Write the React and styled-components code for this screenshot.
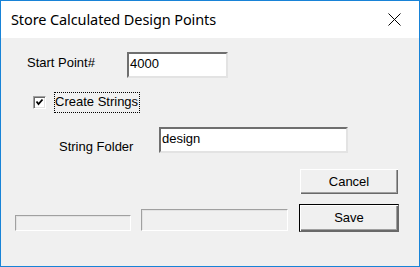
import React from "react";
import styled, { createGlobalStyle } from "styled-components";

const Global = createGlobalStyle`
  html, body { margin: 0; padding: 0; background: #f0f0f0; }
  * { box-sizing: border-box; }
`;

const Window = styled.div`
  width: 420px;
  height: 267px;
  border: 1px solid #1883d7;
  display: flex;
  flex-direction: column;
  background: #f0f0f0;
  font-family: "Liberation Sans", Arial, sans-serif;
  font-size: 13px;
  color: #000;
`;

const TitleBar = styled.div`
  height: 37px;
  flex: none;
  background: #fff;
  display: flex;
  align-items: center;
  padding-left: 10px;
  padding-bottom: 1px;
`;

const Title = styled.div`
  flex: 1;
  font-family: "Noto Sans", "Open Sans", sans-serif;
  font-size: 14.5px;
  letter-spacing: -0.1px;
  color: #000;
`;

const CloseBtn = styled.div`
  width: 46px;
  height: 36px;
  display: flex;
  align-items: center;
  justify-content: center;
  margin-right: 2px;
`;

const Body = styled.div`
  flex: 1;
  display: flex;
  flex-direction: column;
  padding: 14px 0 0 0;
`;

const Row = styled.div`
  display: flex;
  align-items: flex-start;
  padding-left: ${(p) => p.$indent}px;
  margin-top: ${(p) => p.$top || 0}px;
`;

const Label = styled.div`
  width: ${(p) => p.$w}px;
  padding-top: ${(p) => p.$pt}px;
  line-height: 15px;
  white-space: nowrap;
`;

const TextBox = styled.div`
  width: ${(p) => p.$w}px;
  height: 26px;
  background: #fff;
  border-top: 2px solid #6f6f6f;
  border-left: 2px solid #6f6f6f;
  border-right: 2px solid #e3e3e3;
  border-bottom: 2px solid #e3e3e3;
  padding: 2px 0 0 1px;
  line-height: 15px;
`;

const CheckRow = styled.div`
  display: flex;
  align-items: center;
  padding-left: 32px;
  margin-top: 14px;
  height: 21px;
`;

const CheckBox = styled.div`
  width: 13px;
  height: 13px;
  background: #fff;
  border-top: 1px solid #a0a0a0;
  border-left: 1px solid #a0a0a0;
  border-right: 1px solid #fff;
  border-bottom: 1px solid #fff;
  box-shadow: inset 1px 1px 0 #696969, inset -1px -1px 0 #e3e3e3;
  display: flex;
  align-items: center;
  justify-content: center;
`;

const CheckLabel = styled.div`
  margin-left: 8px;
  border: 1px dotted #000;
  padding: 1px 1px 2px 0;
  line-height: 16px;
`;

const Bottom = styled.div`
  display: flex;
  align-items: flex-end;
  padding-left: 14px;
  margin-top: 14px;
`;

const StatusBox = styled.div`
  width: ${(p) => p.$w}px;
  height: ${(p) => p.$h}px;
  margin-right: ${(p) => p.$mr}px;
  margin-bottom: 1px;
  border-top: 1px solid #a0a0a0;
  border-left: 1px solid #a0a0a0;
  border-right: 1px solid #fff;
  border-bottom: 1px solid #fff;
  box-shadow: inset 1px 1px 0 #e3e3e3;
`;

const Buttons = styled.div`
  display: flex;
  flex-direction: column;
  gap: 9px;
`;

const Button = styled.div`
  width: 100px;
  height: ${(p) => (p.$default ? 28 : 27)}px;
  display: flex;
  align-items: center;
  justify-content: center;
  background: #f0f0f0;
  border: 1px solid ${(p) => (p.$default ? "#000" : "transparent")};
  box-shadow: ${(p) =>
    p.$default
      ? "inset 1px 1px 0 #fff, inset -1px -1px 0 #696969, inset -2px -2px 0 #a0a0a0"
      : "inset 1px 1px 0 #fff, inset -1px -1px 0 #696969, inset -2px -2px 0 #a0a0a0"};
  border-right-color: ${(p) => (p.$default ? "#696969" : "transparent")};
  border-bottom-color: ${(p) => (p.$default ? "#696969" : "transparent")};
  padding-bottom: 1px;
`;

export default function App() {
  return (
    <>
      <Global />
      <Window>
        <TitleBar>
          <Title>Store Calculated Design Points</Title>
          <CloseBtn>
            <svg width="13" height="13" viewBox="0 0 13 13">
              <path d="M0.5 0.5 L12.5 12.5 M12.5 0.5 L0.5 12.5" stroke="#000" strokeWidth="1" fill="none" />
            </svg>
          </CloseBtn>
        </TitleBar>
        <Body>
          <Row $indent={26}>
            <Label $w={100} $pt={3}>Start Point#</Label>
            <TextBox $w={101}>4000</TextBox>
          </Row>
          <CheckRow>
            <CheckBox>
              <svg width="9" height="9" viewBox="0 0 9 9">
                <path d="M1.5 3.5 L3.5 6 L7.5 1.5" stroke="#000" strokeWidth="1.8" fill="none" />
              </svg>
            </CheckBox>
            <CheckLabel>Create Strings</CheckLabel>
          </CheckRow>
          <Row $indent={58} $top={14}>
            <Label $w={100} $pt={12}>String Folder</Label>
            <TextBox $w={189}>design</TextBox>
          </Row>
          <Bottom>
            <StatusBox $w={116} $h={16} $mr={10} />
            <StatusBox $w={147} $h={22} $mr={11} />
            <Buttons>
              <Button>Cancel</Button>
              <Button $default>Save</Button>
            </Buttons>
          </Bottom>
        </Body>
      </Window>
    </>
  );
}
